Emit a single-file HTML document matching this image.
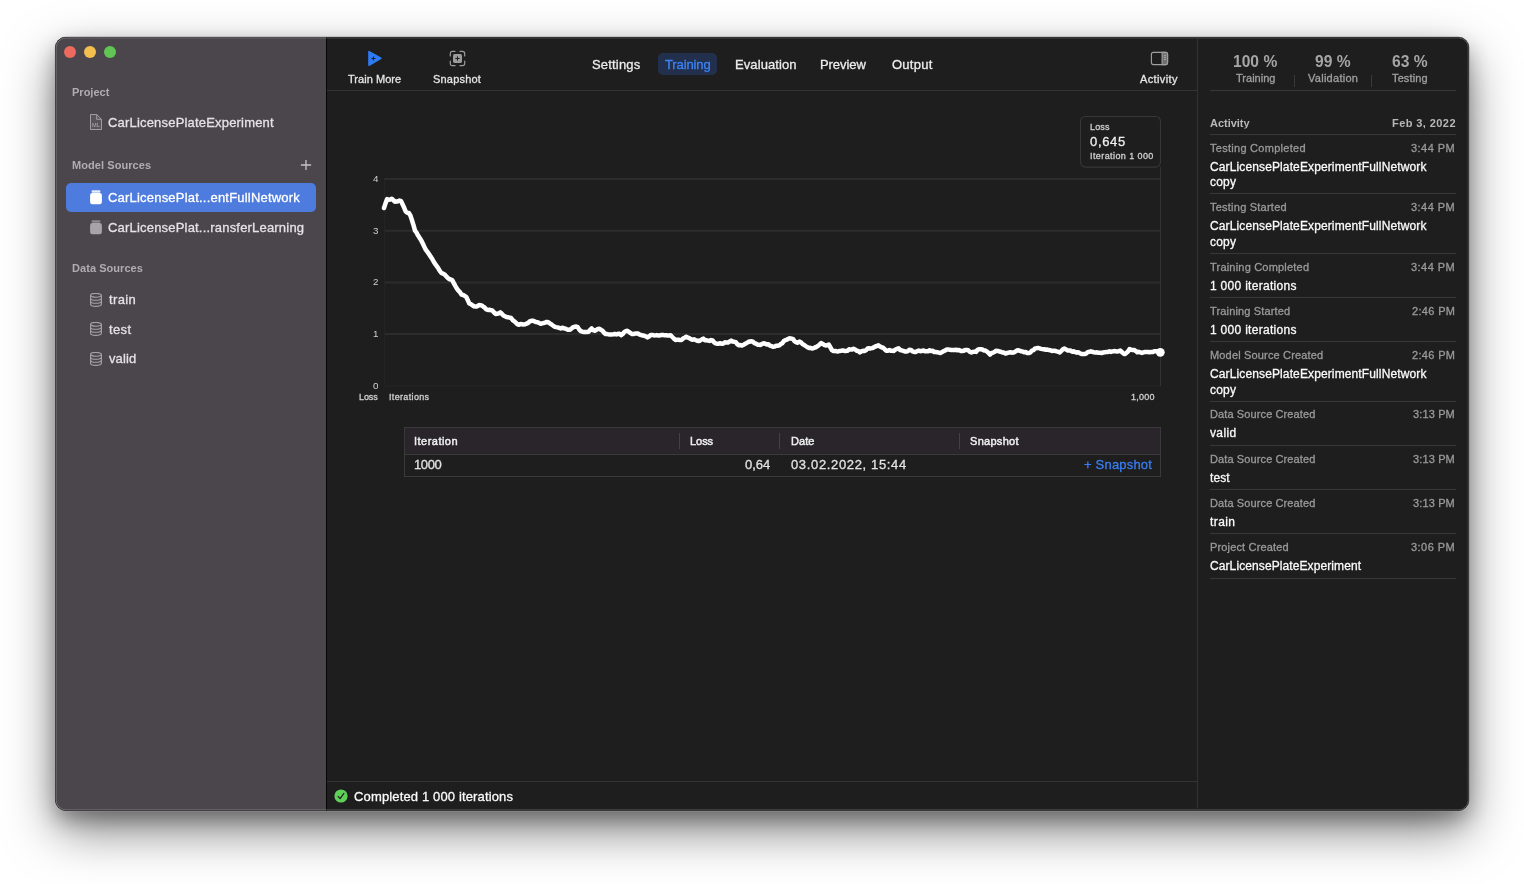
<!DOCTYPE html>
<html lang="en">
<head>
<meta charset="utf-8">
<title>Create ML – CarLicensePlateExperiment</title>
<style>
  html, body { margin: 0; padding: 0; }
  body {
    width: 1524px; height: 884px; overflow: hidden; position: relative;
    background: #ffffff;
    font-family: "Liberation Sans", sans-serif;
    -webkit-font-smoothing: antialiased;
  }
  .win {
    position: absolute; left: 56px; top: 38px; width: 1412px; height: 772px;
    border-radius: 10px; background: #1e1e1e; overflow: hidden;
    box-shadow: 0 20px 50px rgba(0,0,0,0.5), 0 9px 20px rgba(0,0,0,0.3);
  }
  .winborder {
    position: absolute; left: 56px; top: 38px; width: 1412px; height: 772px;
    border-radius: 10px; box-sizing: border-box; border: 1px solid rgba(255,255,255,0.22);
    pointer-events: none;
  }
  /* every coordinate below is in page space; .abs children of body */
  .abs { position: absolute; }
  svg.abs { will-change: transform; }
  .t { will-change: transform; position: absolute; white-space: nowrap; line-height: 1; transform: translateY(-50%); margin-top: -0.5px; -webkit-text-stroke: 0.3px currentColor; }
  .tr { position: absolute; white-space: nowrap; line-height: 1; transform: translateY(-50%); text-align: right; }
  .sidebar { position: absolute; left: 0; top: 0; width: 270px; height: 772px; background: #4b464c; }
  .sidediv { position: absolute; left: 270px; top: 0; width: 1px; height: 772px; background: #070707; }
  .hl { position: absolute; height: 1px; background: #333333; }
  .vl { position: absolute; width: 1px; background: #333333; }
  .sec { font-size: 11px; font-weight: bold; color: #b0acb1; -webkit-text-stroke: 0; }
  .item { font-size: 13px; color: #e4e2e4; }
  .tb { font-size: 11px; color: #e6e6e6; }
  .tab { font-size: 13px; color: #ececec; }
  .g11 { font-size: 11px; color: #9a9a9a; }
  .w12 { font-size: 12px; color: #fafafa; }
  .ax { font-size: 9px; color: #d0d0d0; }
</style>
</head>
<body>
<div class="win"></div>
<svg class="abs" style="left:0;top:0;will-change:auto;" width="1524" height="884" viewBox="0 0 1524 884">
  <defs>
    <clipPath id="winclip"><rect x="55.3" y="37.1" width="1413.7" height="773.6" rx="10.5"/></clipPath>
  </defs>
  <rect x="54.9" y="36.7" width="1414.5" height="774.4" rx="10.9" fill="none" stroke="rgba(255,255,255,0.35)" stroke-width="0.8"/>
  <g clip-path="url(#winclip)">
    <rect x="50" y="30" width="1430" height="790" fill="#1e1e1e"/>
    <rect x="50" y="30" width="276" height="790" fill="#4b464c"/>
    <rect x="326" y="30" width="1" height="790" fill="#070707"/>
  </g>
  <rect x="55.3" y="37.1" width="1413.7" height="773.6" rx="10.5" fill="none" stroke="rgba(0,0,0,0.55)" stroke-width="0.7"/>
  <rect x="56.1" y="37.9" width="1412.1" height="772" rx="9.8" fill="none" stroke="rgba(255,255,255,0.25)" stroke-width="0.9"/>
</svg>

<!-- SIDEBAR -->
<div id="sidebar-content">
  <div class="abs" style="left:64px;top:46px;width:12px;height:12px;border-radius:50%;background:#ec6a5e;"></div>
  <div class="abs" style="left:84px;top:46px;width:12px;height:12px;border-radius:50%;background:#f4bf4f;"></div>
  <div class="abs" style="left:104px;top:46px;width:12px;height:12px;border-radius:50%;background:#61c554;"></div>

  <div class="t sec" id="s_project" style="left:72.30px;letter-spacing:0.012px;top:92px;">Project</div>
  <svg class="abs" style="left:89px;top:113px;" width="14" height="18" viewBox="0 0 14 18">
    <path d="M1.5 1.5 H7.7 L12.5 6.3 V16.5 H1.5 Z" fill="rgba(255,255,255,0.07)" stroke="#aaa6ab" stroke-width="0.9" stroke-linejoin="round"/>
    <path d="M7.7 1.5 V6.3 H12.5" fill="none" stroke="#aaa6ab" stroke-width="0.9" stroke-linejoin="round"/>
    <text x="7" y="14.2" font-family="Liberation Sans, sans-serif" font-size="5.6" fill="#b5b1b6" text-anchor="middle">ML</text>
  </svg>
  <div class="t item" id="s_proj" style="left:108.30px;letter-spacing:0.187px;top:122.1px;">CarLicensePlateExperiment</div>

  <div class="t sec" id="s_model" style="left:72.30px;letter-spacing:0.073px;top:165px;">Model Sources</div>
  <svg class="abs" style="left:300px;top:159px;" width="12" height="12" viewBox="0 0 12 12">
    <path d="M6 0.9 V11.1 M0.9 6 H11.1" stroke="#c6c2c7" stroke-width="1.3" fill="none"/>
  </svg>

  <div class="abs" style="left:66px;top:183px;width:250px;height:29.3px;border-radius:5px;background:#4d7bde;"></div>
  <svg class="abs" style="left:90px;top:190px;" width="12" height="15" viewBox="0 0 12 15">
    <rect x="1.6" y="0.2" width="8.8" height="2.6" rx="1.1" fill="#ffffff" opacity="0.85"/>
    <rect x="0.1" y="3" width="11.8" height="11.2" rx="2.2" fill="#ffffff"/>
  </svg>
  <div class="t item" id="s_m1" style="left:108.30px;letter-spacing:0.204px;top:197.9px;color:#ffffff;">CarLicensePlat...entFullNetwork</div>

  <svg class="abs" style="left:90px;top:219.5px;" width="12" height="15" viewBox="0 0 12 15">
    <rect x="1.6" y="0.2" width="8.8" height="2.6" rx="1.1" fill="#8d898e"/>
    <rect x="0.1" y="3" width="11.8" height="11.2" rx="2.2" fill="#a7a3a8"/>
  </svg>
  <div class="t item" id="s_m2" style="left:108.30px;letter-spacing:0.193px;top:227.2px;">CarLicensePlat...ransferLearning</div>

  <div class="t sec" id="s_data" style="left:72.30px;letter-spacing:0.055px;top:268.5px;">Data Sources</div>

  <svg class="abs" style="left:90px;top:292.5px;" width="12" height="14" viewBox="0 0 12 14"><use href="#dbicon"/></svg>
  <div class="t item" id="s_d1" style="left:108.50px;letter-spacing:0.360px;top:299.5px;">train</div>
  <svg class="abs" style="left:90px;top:322px;" width="12" height="14" viewBox="0 0 12 14"><use href="#dbicon"/></svg>
  <div class="t item" id="s_d2" style="left:108.50px;letter-spacing:0.386px;top:329px;">test</div>
  <svg class="abs" style="left:90px;top:351.5px;" width="12" height="14" viewBox="0 0 12 14"><use href="#dbicon"/></svg>
  <div class="t item" id="s_d3" style="left:108.50px;letter-spacing:0.098px;top:358.5px;">valid</div>

  <svg width="0" height="0" style="position:absolute">
    <defs>
      <g id="dbicon" fill="none" stroke="#a7a3a8" stroke-width="1.1">
        <ellipse cx="6" cy="2.3" rx="5.4" ry="1.9"/>
        <path d="M0.6 2.3 V11.3 C0.6 12.5 3 13.4 6 13.4 C9 13.4 11.4 12.5 11.4 11.3 V2.3"/>
        <path d="M0.6 5.2 C0.6 6.4 3 7.3 6 7.3 C9 7.3 11.4 6.4 11.4 5.2"/>
        <path d="M0.6 8.2 C0.6 9.4 3 10.3 6 10.3 C9 10.3 11.4 9.4 11.4 8.2"/>
      </g>
    </defs>
  </svg>
</div>

<!-- TOOLBAR -->
<div id="toolbar-content">
  <div class="hl" style="left:327px;top:90px;width:871px;"></div>

  <!-- Train More -->
  <svg class="abs" style="left:366px;top:50px;" width="18" height="17" viewBox="0 0 18 17">
    <path d="M3 1.6 L14.8 8.3 L3 15.2 Z" fill="#2f7bf6" stroke="#2f7bf6" stroke-width="1.6" stroke-linejoin="round"/>
    <path d="M7.4 6.4 V10.6 M5.3 8.5 H9.5" stroke="#1e1e1e" stroke-width="1" fill="none"/>
  </svg>
  <div class="t tb" id="t_train" style="left:347.60px;letter-spacing:0.039px;top:79.6px;">Train More</div>

  <!-- Snapshot -->
  <svg class="abs" style="left:449px;top:50px;" width="17" height="17" viewBox="0 0 17 17">
    <g fill="none" stroke="#9b9b9b" stroke-width="1.2" stroke-linecap="round">
      <path d="M1.3 6 V3.5 Q1.3 1.3 3.5 1.3 H6"/>
      <path d="M11 1.3 H13.5 Q15.7 1.3 15.7 3.5 V6"/>
      <path d="M15.7 11 V13.5 Q15.7 15.7 13.5 15.7 H11"/>
      <path d="M6 15.7 H3.5 Q1.3 15.7 1.3 13.5 V11"/>
    </g>
    <rect x="4" y="4.1" width="9" height="8.8" rx="1.6" fill="#9b9b9b"/>
    <path d="M8.5 6.3 V10.7 M6.3 8.5 H10.7" stroke="#1e1e1e" stroke-width="1" fill="none"/>
  </svg>
  <div class="t tb" id="t_snap" style="left:432.90px;letter-spacing:0.196px;top:79.6px;">Snapshot</div>

  <!-- Tabs -->
  <div class="t tab" id="t_settings" style="left:591.50px;letter-spacing:0.175px;top:64.4px;">Settings</div>
  <div class="abs" style="left:658px;top:53px;width:59px;height:22px;border-radius:5px;background:#22304d;"></div>
  <div class="t tab" id="t_training" style="left:665.00px;letter-spacing:-0.122px;top:64.4px;color:#3d84f7;">Training</div>
  <div class="t tab" id="t_eval" style="left:734.90px;letter-spacing:0.091px;top:64.4px;">Evaluation</div>
  <div class="t tab" id="t_preview" style="left:820.20px;letter-spacing:-0.075px;top:64.4px;">Preview</div>
  <div class="t tab" id="t_output" style="left:891.50px;letter-spacing:0.257px;top:64.4px;">Output</div>

  <!-- Activity -->
  <svg class="abs" style="left:1150px;top:51px;" width="19" height="15" viewBox="0 0 19 15">
    <rect x="1.4" y="1.4" width="16.2" height="12.2" rx="2" fill="none" stroke="#a0a0a0" stroke-width="1.1"/>
    <path d="M12.1 1.4 H15.6 Q17.6 1.4 17.6 3.4 V11.6 Q17.6 13.6 15.6 13.6 H12.1 Z" fill="#6f6f6f" stroke="#a0a0a0" stroke-width="1.1"/>
    <path d="M14.2 4.3 H15.8 M14.2 6.3 H15.8 M14.2 8.3 H15.8" stroke="#d8d8d8" stroke-width="0.7"/>
  </svg>
  <div class="t tb" id="t_activity" style="left:1140.00px;letter-spacing:0.380px;top:79.6px;">Activity</div>
</div>

<!-- CHART -->
<div id="chart-content">
  <svg class="abs" style="left:0;top:0;" width="1524" height="884" viewBox="0 0 1524 884">
    <g stroke="#2c2c2c" stroke-width="2" fill="none">
      <path d="M384 179 H1160 M384 230.7 H1160 M384 282.4 H1160 M384 334.1 H1160"/>
    </g>
    <path d="M1160.5 167 V386" stroke="#323232" stroke-width="1" fill="none" shape-rendering="crispEdges"/>
    <path d="M384.5 179 V386" stroke="#242424" stroke-width="1" fill="none" shape-rendering="crispEdges"/>
    <path d="M384 385.7 H1160" stroke="#222222" stroke-width="1.4" fill="none"/>
    <polyline points="384.0,208.0 385.6,203.1 387.1,199.1 388.7,199.8 390.2,199.6 391.8,198.8 393.3,200.1 394.9,201.8 396.4,201.6 398.0,201.2 399.5,200.5 401.1,201.1 402.6,204.4 404.2,207.8 405.7,211.5 407.3,212.7 408.8,213.0 410.4,215.5 411.9,220.0 413.5,225.2 415.0,230.7 416.6,232.7 418.1,235.6 419.7,238.0 421.2,240.4 422.8,243.5 424.3,246.7 425.9,249.9 427.4,251.8 429.0,254.1 430.5,256.4 432.1,258.7 433.6,261.5 435.2,263.9 436.7,266.1 438.3,268.3 439.8,270.9 441.4,273.0 442.9,273.6 444.5,274.4 446.0,276.0 447.6,277.8 449.1,279.0 450.7,279.5 452.2,280.1 453.8,283.1 455.3,285.9 456.9,288.6 458.4,290.6 460.0,292.2 461.5,294.6 463.1,295.0 464.6,295.8 466.2,296.8 467.7,299.9 469.3,303.5 470.8,304.1 472.4,305.3 473.9,306.2 475.5,306.5 477.0,306.4 478.6,305.3 480.1,305.1 481.7,305.4 483.2,306.6 484.8,307.7 486.3,309.4 487.9,310.0 489.4,309.8 491.0,310.1 492.5,310.7 494.1,312.5 495.6,313.9 497.2,313.8 498.7,313.3 500.3,312.3 501.8,313.7 503.4,315.5 504.9,316.2 506.5,317.0 508.0,317.3 509.6,317.6 511.1,318.0 512.7,320.1 514.2,321.2 515.8,322.7 517.3,324.2 518.9,324.8 520.4,324.1 522.0,324.3 523.5,324.5 525.1,324.3 526.6,323.6 528.2,322.9 529.7,321.4 531.3,320.8 532.8,320.7 534.4,321.3 535.9,322.1 537.5,322.2 539.0,322.9 540.6,323.8 542.1,323.4 543.6,323.0 545.2,322.6 546.7,321.9 548.3,322.3 549.8,323.4 551.4,324.4 552.9,325.5 554.5,326.6 556.0,327.1 557.6,327.4 559.1,327.9 560.7,328.5 562.2,327.8 563.8,328.2 565.3,328.6 566.9,329.3 568.4,329.8 570.0,329.8 571.5,328.6 573.1,327.2 574.6,326.8 576.2,326.5 577.7,327.1 579.3,329.6 580.8,331.1 582.4,331.7 583.9,331.9 585.5,332.1 587.0,332.0 588.6,331.8 590.1,330.0 591.7,328.5 593.2,330.1 594.8,330.8 596.3,330.0 597.9,328.9 599.4,328.7 601.0,329.9 602.5,330.8 604.1,332.7 605.6,334.0 607.2,334.1 608.7,334.4 610.3,334.4 611.8,334.4 613.4,334.3 614.9,334.0 616.5,334.4 618.0,333.8 619.6,333.8 621.1,335.2 622.7,334.0 624.2,332.1 625.8,331.1 627.3,330.8 628.9,331.8 630.4,333.1 632.0,333.9 633.5,334.0 635.1,333.6 636.6,333.6 638.2,333.6 639.7,334.6 641.3,335.0 642.8,335.6 644.4,335.8 645.9,336.3 647.5,337.4 649.0,336.5 650.6,335.1 652.1,334.9 653.7,335.2 655.2,335.4 656.8,335.1 658.3,335.5 659.9,335.4 661.4,335.0 663.0,334.9 664.5,335.3 666.1,335.2 667.6,335.4 669.2,335.6 670.7,335.3 672.3,337.0 673.8,338.5 675.4,339.9 676.9,339.7 678.5,339.7 680.0,340.0 681.6,340.0 683.1,338.5 684.7,337.6 686.2,336.7 687.8,337.6 689.3,338.1 690.9,339.1 692.4,339.8 694.0,339.3 695.5,340.0 697.1,340.7 698.6,341.0 700.2,340.5 701.7,339.5 703.3,338.6 704.8,340.2 706.4,340.3 707.9,340.6 709.5,340.9 711.0,340.1 712.6,340.5 714.1,342.3 715.7,343.4 717.2,343.7 718.8,343.7 720.3,343.2 721.9,343.8 723.4,343.6 725.0,342.3 726.5,342.4 728.1,342.4 729.6,341.6 731.2,340.6 732.7,341.5 734.3,341.8 735.8,342.2 737.4,344.3 738.9,345.2 740.5,345.1 742.0,345.6 743.6,344.8 745.1,343.9 746.7,343.0 748.2,342.0 749.8,341.5 751.3,341.3 752.9,341.7 754.4,343.1 756.0,343.7 757.5,344.7 759.1,344.7 760.6,345.0 762.2,343.9 763.7,343.3 765.3,343.7 766.8,344.5 768.4,344.2 769.9,345.6 771.5,346.1 773.0,346.8 774.6,346.6 776.1,345.7 777.7,345.8 779.2,345.4 780.8,344.1 782.3,343.3 783.9,341.0 785.4,340.1 787.0,339.6 788.5,338.6 790.1,338.3 791.6,338.7 793.2,339.2 794.7,341.4 796.3,342.4 797.8,342.7 799.4,341.6 800.9,342.3 802.5,344.0 804.0,344.9 805.6,346.0 807.1,347.0 808.7,347.9 810.2,347.8 811.8,348.4 813.3,348.2 814.9,347.5 816.4,347.0 818.0,345.9 819.5,344.6 821.1,343.1 822.6,343.9 824.2,344.9 825.7,345.4 827.3,345.2 828.8,344.6 830.4,347.4 831.9,350.1 833.5,351.1 835.0,351.0 836.6,351.3 838.1,351.5 839.7,350.9 841.2,350.8 842.8,350.4 844.3,350.9 845.9,350.9 847.4,350.8 849.0,349.3 850.5,349.6 852.1,349.6 853.6,348.8 855.2,349.5 856.7,350.7 858.3,351.0 859.8,352.5 861.4,351.4 862.9,350.8 864.5,350.9 866.0,350.2 867.6,348.5 869.1,348.2 870.7,348.4 872.2,348.1 873.8,347.4 875.3,346.5 876.9,346.0 878.4,345.3 880.0,346.5 881.5,347.3 883.1,347.7 884.6,349.1 886.2,350.8 887.7,350.7 889.3,349.9 890.8,350.8 892.4,350.8 893.9,350.9 895.5,349.5 897.0,348.9 898.6,348.3 900.1,350.0 901.7,350.4 903.2,350.8 904.8,351.4 906.3,351.6 907.9,351.1 909.4,349.8 911.0,349.9 912.5,351.4 914.1,351.9 915.6,352.0 917.2,351.1 918.7,350.6 920.3,351.2 921.8,351.0 923.4,350.4 924.9,351.3 926.5,351.2 928.0,351.3 929.6,350.2 931.1,351.1 932.7,350.7 934.2,352.0 935.8,352.1 937.3,352.3 938.9,352.6 940.4,353.0 942.0,352.1 943.5,351.2 945.1,350.6 946.6,349.4 948.2,349.4 949.7,349.8 951.3,350.0 952.8,350.1 954.4,350.0 955.9,349.8 957.5,350.2 959.0,349.9 960.6,350.9 962.1,351.1 963.7,350.8 965.2,349.9 966.8,350.0 968.3,350.3 969.9,351.8 971.4,352.5 973.0,351.9 974.5,351.6 976.1,351.9 977.6,349.8 979.2,349.2 980.7,349.2 982.3,349.5 983.8,350.4 985.4,350.5 986.9,351.5 988.5,352.9 990.0,354.5 991.6,353.0 993.1,352.6 994.7,351.7 996.2,350.8 997.8,350.9 999.3,351.5 1000.9,351.8 1002.4,352.5 1004.0,352.6 1005.5,353.5 1007.1,353.0 1008.6,352.6 1010.2,352.2 1011.7,352.7 1013.3,352.6 1014.8,352.0 1016.4,350.8 1017.9,350.2 1019.5,350.6 1021.0,351.3 1022.6,351.4 1024.1,352.2 1025.7,352.1 1027.2,352.9 1028.8,353.1 1030.3,352.5 1031.9,350.6 1033.4,350.2 1035.0,348.4 1036.5,348.3 1038.1,347.9 1039.6,348.3 1041.2,348.8 1042.7,349.2 1044.3,349.2 1045.8,349.8 1047.4,349.6 1048.9,350.1 1050.5,350.3 1052.0,350.9 1053.6,350.8 1055.1,350.8 1056.7,351.4 1058.2,351.7 1059.8,352.5 1061.3,351.0 1062.9,349.3 1064.4,348.6 1066.0,349.4 1067.5,350.4 1069.1,350.5 1070.6,350.6 1072.2,351.8 1073.7,351.3 1075.3,352.2 1076.8,352.7 1078.4,352.2 1079.9,353.3 1081.5,354.0 1083.0,354.0 1084.6,354.0 1086.1,353.6 1087.7,352.1 1089.2,351.8 1090.8,351.3 1092.3,351.8 1093.9,352.2 1095.4,352.4 1097.0,352.3 1098.5,352.8 1100.1,352.8 1101.6,353.0 1103.2,352.5 1104.7,352.2 1106.3,352.1 1107.8,352.0 1109.4,351.3 1110.9,351.9 1112.5,351.4 1114.0,351.1 1115.6,351.2 1117.1,351.4 1118.7,351.2 1120.2,350.5 1121.8,352.0 1123.3,353.4 1124.9,354.1 1126.4,352.9 1128.0,351.5 1129.5,349.1 1131.1,349.7 1132.6,349.9 1134.2,350.1 1135.7,350.9 1137.3,352.3 1138.8,351.8 1140.4,352.4 1141.9,352.9 1143.5,352.4 1145.0,351.9 1146.6,351.9 1148.1,352.1 1149.7,352.3 1151.2,352.1 1152.8,352.1 1154.3,351.3 1155.9,351.2 1157.4,351.3 1159.0,352.2 1160.2,352.2" fill="none" stroke="#ffffff" stroke-width="4.5" stroke-linejoin="round" stroke-linecap="round"/>
    <circle cx="1160.3" cy="352.3" r="4.4" fill="#ffffff"/>
    <rect x="1080.5" y="116.5" width="80" height="50.6" rx="5" fill="#1e1e1e" stroke="#373737" stroke-width="1.1"/>
  </svg>
  <div class="tr ax" id="c_y4" style="right:1145.5px;top:178.6px;font-size:9.8px;">4</div>
  <div class="tr ax" id="c_y3" style="right:1145.5px;top:230.6px;font-size:9.8px;">3</div>
  <div class="tr ax" id="c_y2" style="right:1145.5px;top:282.1px;font-size:9.8px;">2</div>
  <div class="tr ax" id="c_y1" style="right:1145.5px;top:333.6px;font-size:9.8px;">1</div>
  <div class="tr ax" id="c_y0" style="right:1145.5px;top:385.6px;font-size:9.8px;">0</div>
  <div class="t ax" id="c_loss" style="left:359.10px;letter-spacing:-0.070px;top:397px;">Loss</div>
  <div class="t ax" id="c_iter" style="left:389.10px;letter-spacing:0.342px;top:397px;">Iterations</div>
  <div class="t ax" id="c_1000" style="left:1130.90px;letter-spacing:0.221px;top:397.5px;">1,000</div>

  <div class="t ax" id="c_tl" style="left:1089.70px;letter-spacing:0.163px;top:127px;">Loss</div>
  <div class="t" id="c_tv" style="left:1089.70px;letter-spacing:0.675px;top:141.5px;font-size:13px;color:#f0f0f0;">0,645</div>
  <div class="t ax" id="c_ti" style="left:1089.70px;letter-spacing:0.412px;top:156.5px;">Iteration 1 000</div>
</div>

<!-- TABLE -->
<div id="table-content">
  <div class="abs" style="left:404px;top:427px;width:757px;height:50px;box-sizing:border-box;border:1px solid #3a3a3a;background:#1e1e1e;"></div>
  <div class="abs" style="left:405px;top:428px;width:755px;height:26px;background:#29252b;"></div>
  <div class="hl" style="left:405px;top:454px;width:755px;background:#3a3a3a;"></div>
  <div class="vl" style="left:679px;top:433px;height:16px;background:#444146;"></div>
  <div class="vl" style="left:779px;top:433px;height:16px;background:#444146;"></div>
  <div class="vl" style="left:959px;top:433px;height:16px;background:#444146;"></div>
  <div class="t" id="tb_h1" style="left:413.87px;letter-spacing:0.480px;top:441.5px;font-size:11px;-webkit-text-stroke:0.45px currentColor;color:#f0f0f0;">Iteration</div>
  <div class="t" id="tb_h2" style="left:690.00px;letter-spacing:-0.045px;top:441.5px;font-size:11px;-webkit-text-stroke:0.45px currentColor;color:#f0f0f0;">Loss</div>
  <div class="t" id="tb_h3" style="left:790.50px;letter-spacing:0.061px;top:441.5px;font-size:11px;-webkit-text-stroke:0.45px currentColor;color:#f0f0f0;">Date</div>
  <div class="t" id="tb_h4" style="left:970.30px;letter-spacing:0.296px;top:441.5px;font-size:11px;-webkit-text-stroke:0.45px currentColor;color:#f0f0f0;">Snapshot</div>
  <div class="t" id="tb_r1" style="left:414.10px;letter-spacing:-0.363px;top:464.8px;font-size:13px;color:#e2e2e2;">1000</div>
  <div class="t" id="tb_r2" style="left:744.90px;letter-spacing:-0.057px;top:464.8px;font-size:13px;color:#e2e2e2;">0,64</div>
  <div class="t" id="tb_r3" style="left:790.50px;letter-spacing:0.644px;top:464.8px;font-size:13px;color:#e2e2e2;">03.02.2022, 15:44</div>
  <div class="t" id="tb_r4" style="left:1083.60px;letter-spacing:0.197px;top:464.8px;font-size:13px;color:#3a7ef0;">+ Snapshot</div>
</div>

<!-- RIGHT PANEL -->
<div id="right-content">
  <div class="vl" style="left:1197px;top:38px;height:772px;background:#323232;"></div>
  <div class="t" id="r_sv0" style="left:1233.30px;letter-spacing:0.008px;top:62px;font-size:15.6px;font-weight:bold;-webkit-text-stroke:0;color:#a6a6a6;">100 %</div>
  <div class="t g11" id="r_sl0" style="left:1236.00px;letter-spacing:0.012px;top:78.6px;color:#a0a0a0;">Training</div>
  <div class="t" id="r_sv1" style="left:1315.20px;letter-spacing:0.041px;top:62px;font-size:15.6px;font-weight:bold;-webkit-text-stroke:0;color:#a6a6a6;">99 %</div>
  <div class="t g11" id="r_sl1" style="left:1307.50px;letter-spacing:0.269px;top:78.6px;color:#a0a0a0;">Validation</div>
  <div class="t" id="r_sv2" style="left:1391.70px;letter-spacing:0.041px;top:62px;font-size:15.6px;font-weight:bold;-webkit-text-stroke:0;color:#a6a6a6;">63 %</div>
  <div class="t g11" id="r_sl2" style="left:1392.20px;letter-spacing:0.127px;top:78.6px;color:#a0a0a0;">Testing</div>
  <div class="vl" style="left:1294px;top:75px;height:12px;background:#3a3a3a;"></div>
  <div class="vl" style="left:1371px;top:75px;height:12px;background:#3a3a3a;"></div>
  <div class="hl" style="left:1210px;top:90px;width:246px;background:#383838;"></div>
  <div class="t" id="r_act" style="left:1210.00px;letter-spacing:-0.017px;top:123.1px;font-size:11px;font-weight:bold;-webkit-text-stroke:0;color:#b8b8b8;">Activity</div>
  <div class="t" id="r_date" style="left:1391.70px;letter-spacing:0.420px;top:123.1px;font-size:11px;font-weight:bold;-webkit-text-stroke:0;color:#b8b8b8;">Feb 3, 2022</div>
  <div class="hl" style="left:1210px;top:134px;width:246px;background:#383838;"></div>
  <div class="t g11" id="r_e0t" style="left:1210.00px;letter-spacing:0.276px;top:148.4px;">Testing Completed</div>
  <div class="t g11" id="r_e0m" style="left:1411.40px;letter-spacing:0.466px;top:148.4px;">3:44 PM</div>
  <div class="t w12" id="r_e0b0" style="left:1210.00px;letter-spacing:0.123px;top:167.5px;">CarLicensePlateExperimentFullNetwork</div>
  <div class="t w12" id="r_e0b1" style="left:1210.00px;letter-spacing:0.217px;top:182.6px;">copy</div>
  <div class="hl" style="left:1210px;top:193px;width:246px;background:#383838;"></div>
  <div class="t g11" id="r_e1t" style="left:1210.00px;letter-spacing:0.232px;top:207.8px;">Testing Started</div>
  <div class="t g11" id="r_e1m" style="left:1411.40px;letter-spacing:0.466px;top:207.8px;">3:44 PM</div>
  <div class="t w12" id="r_e1b0" style="left:1210.00px;letter-spacing:0.123px;top:226.9px;">CarLicensePlateExperimentFullNetwork</div>
  <div class="t w12" id="r_e1b1" style="left:1210.00px;letter-spacing:0.217px;top:242px;">copy</div>
  <div class="hl" style="left:1210px;top:252.5px;width:246px;background:#383838;"></div>
  <div class="t g11" id="r_e2t" style="left:1210.00px;letter-spacing:0.202px;top:267.1px;">Training Completed</div>
  <div class="t g11" id="r_e2m" style="left:1411.40px;letter-spacing:0.466px;top:267.1px;">3:44 PM</div>
  <div class="t w12" id="r_e2b0" style="left:1210.00px;letter-spacing:0.296px;top:286.2px;">1 000 iterations</div>
  <div class="hl" style="left:1210px;top:297px;width:246px;background:#383838;"></div>
  <div class="t g11" id="r_e3t" style="left:1210.00px;letter-spacing:0.151px;top:311.2px;">Training Started</div>
  <div class="t g11" id="r_e3m" style="left:1412.20px;letter-spacing:0.333px;top:311.2px;">2:46 PM</div>
  <div class="t w12" id="r_e3b0" style="left:1210.00px;letter-spacing:0.296px;top:330.3px;">1 000 iterations</div>
  <div class="hl" style="left:1210px;top:341px;width:246px;background:#383838;"></div>
  <div class="t g11" id="r_e4t" style="left:1210.00px;letter-spacing:0.166px;top:355.8px;">Model Source Created</div>
  <div class="t g11" id="r_e4m" style="left:1412.20px;letter-spacing:0.333px;top:355.8px;">2:46 PM</div>
  <div class="t w12" id="r_e4b0" style="left:1210.00px;letter-spacing:0.123px;top:374.9px;">CarLicensePlateExperimentFullNetwork</div>
  <div class="t w12" id="r_e4b1" style="left:1210.00px;letter-spacing:0.217px;top:390px;">copy</div>
  <div class="hl" style="left:1210px;top:400.7px;width:246px;background:#383838;"></div>
  <div class="t g11" id="r_e5t" style="left:1210.00px;letter-spacing:0.110px;top:414.8px;">Data Source Created</div>
  <div class="t g11" id="r_e5m" style="left:1413.40px;letter-spacing:0.133px;top:414.8px;">3:13 PM</div>
  <div class="t w12" id="r_e5b0" style="left:1210.00px;letter-spacing:0.374px;top:433.9px;">valid</div>
  <div class="hl" style="left:1210px;top:445px;width:246px;background:#383838;"></div>
  <div class="t g11" id="r_e6t" style="left:1210.00px;letter-spacing:0.110px;top:459.1px;">Data Source Created</div>
  <div class="t g11" id="r_e6m" style="left:1413.40px;letter-spacing:0.133px;top:459.1px;">3:13 PM</div>
  <div class="t w12" id="r_e6b0" style="left:1210.00px;letter-spacing:0.097px;top:478.2px;">test</div>
  <div class="hl" style="left:1210px;top:489.3px;width:246px;background:#383838;"></div>
  <div class="t g11" id="r_e7t" style="left:1210.00px;letter-spacing:0.110px;top:503.3px;">Data Source Created</div>
  <div class="t g11" id="r_e7m" style="left:1413.40px;letter-spacing:0.133px;top:503.3px;">3:13 PM</div>
  <div class="t w12" id="r_e7b0" style="left:1210.00px;letter-spacing:0.408px;top:522.4px;">train</div>
  <div class="hl" style="left:1210px;top:533.4px;width:246px;background:#383838;"></div>
  <div class="t g11" id="r_e8t" style="left:1210.00px;letter-spacing:0.157px;top:547.6px;">Project Created</div>
  <div class="t g11" id="r_e8m" style="left:1411.40px;letter-spacing:0.466px;top:547.6px;">3:06 PM</div>
  <div class="t w12" id="r_e8b0" style="left:1210.00px;letter-spacing:0.096px;top:566.7px;">CarLicensePlateExperiment</div>
  <div class="hl" style="left:1210px;top:578px;width:246px;background:#383838;"></div>
</div>

<!-- STATUS BAR -->
<div id="status-content">
  <div class="hl" style="left:327px;top:781px;width:871px;"></div>
  <svg class="abs" style="left:334px;top:789px;" width="14" height="14" viewBox="0 0 14 14">
    <circle cx="7" cy="7" r="6.6" fill="#5fcf5a"/>
    <path d="M4.1 7.4 L6.1 9.6 L9.9 4.4" fill="none" stroke="#1e1e1e" stroke-width="1.2" stroke-linecap="round" stroke-linejoin="round"/>
  </svg>
  <div class="t" id="st_txt" style="left:354.30px;letter-spacing:0.145px;top:796.5px;font-size:13px;color:#fafafa;">Completed 1 000 iterations</div>
</div>

</body>
</html>
